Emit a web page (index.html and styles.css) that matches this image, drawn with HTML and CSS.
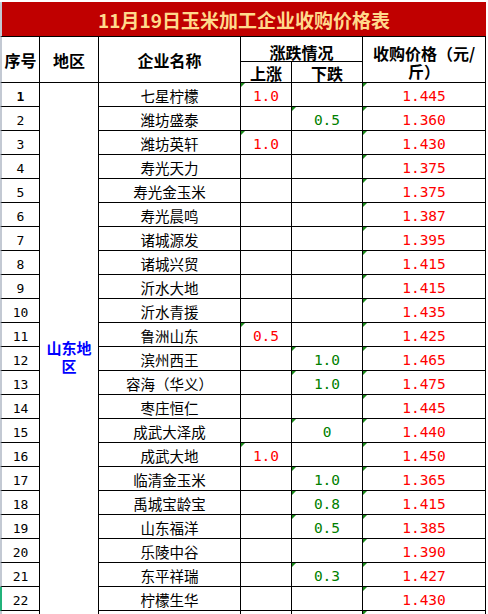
FILE: index.html
```html
<!DOCTYPE html>
<html lang="zh-CN">
<head>
<meta charset="utf-8">
<title>11月19日玉米加工企业收购价格表</title>
<link rel="stylesheet" href="styles.css">
</head>
<body>
<div class="sheet">
  <div class="grid">
    <div class="title">11月19日玉米加工企业收购价格表</div>

    <div class="c h sn-h rs2">序号</div>
    <div class="c h rs2">地区</div>
    <div class="c h rs2">企业名称</div>
    <div class="c h cs2 grp">涨跌情况</div>
    <div class="c h rs2 price-h"><span class="lines">收购价格（元/<br>斤）</span></div>
    <div class="c h sub">上涨</div>
    <div class="c h sub">下跌</div>

    <div class="c d sn bold">1</div>
    <div class="c region"><span>山东地区</span></div>
    <div class="c d name">七星柠檬</div>
    <div class="c d num up t">1.0</div>
    <div class="c d num down"></div>
    <div class="c d num val t">1.445</div>

    <div class="c d sn">2</div>
    <div class="c d name">潍坊盛泰</div>
    <div class="c d num up"></div>
    <div class="c d num down t">0.5</div>
    <div class="c d num val t">1.360</div>

    <div class="c d sn">3</div>
    <div class="c d name">潍坊英轩</div>
    <div class="c d num up t">1.0</div>
    <div class="c d num down"></div>
    <div class="c d num val t">1.430</div>

    <div class="c d sn">4</div>
    <div class="c d name">寿光天力</div>
    <div class="c d num up"></div>
    <div class="c d num down"></div>
    <div class="c d num val t">1.375</div>

    <div class="c d sn">5</div>
    <div class="c d name">寿光金玉米</div>
    <div class="c d num up"></div>
    <div class="c d num down"></div>
    <div class="c d num val t">1.375</div>

    <div class="c d sn">6</div>
    <div class="c d name">寿光晨鸣</div>
    <div class="c d num up"></div>
    <div class="c d num down"></div>
    <div class="c d num val t">1.387</div>

    <div class="c d sn">7</div>
    <div class="c d name">诸城源发</div>
    <div class="c d num up"></div>
    <div class="c d num down"></div>
    <div class="c d num val t">1.395</div>

    <div class="c d sn">8</div>
    <div class="c d name">诸城兴贸</div>
    <div class="c d num up"></div>
    <div class="c d num down"></div>
    <div class="c d num val t">1.415</div>

    <div class="c d sn">9</div>
    <div class="c d name">沂水大地</div>
    <div class="c d num up"></div>
    <div class="c d num down"></div>
    <div class="c d num val t">1.415</div>

    <div class="c d sn">10</div>
    <div class="c d name">沂水青援</div>
    <div class="c d num up"></div>
    <div class="c d num down"></div>
    <div class="c d num val t">1.435</div>

    <div class="c d sn">11</div>
    <div class="c d name">鲁洲山东</div>
    <div class="c d num up t">0.5</div>
    <div class="c d num down"></div>
    <div class="c d num val t">1.425</div>

    <div class="c d sn">12</div>
    <div class="c d name">滨州西王</div>
    <div class="c d num up"></div>
    <div class="c d num down t">1.0</div>
    <div class="c d num val t">1.465</div>

    <div class="c d sn">13</div>
    <div class="c d name">容海（华义）</div>
    <div class="c d num up"></div>
    <div class="c d num down t">1.0</div>
    <div class="c d num val t">1.475</div>

    <div class="c d sn">14</div>
    <div class="c d name">枣庄恒仁</div>
    <div class="c d num up"></div>
    <div class="c d num down"></div>
    <div class="c d num val t">1.445</div>

    <div class="c d sn">15</div>
    <div class="c d name">成武大泽成</div>
    <div class="c d num up"></div>
    <div class="c d num down t">0</div>
    <div class="c d num val t">1.440</div>

    <div class="c d sn">16</div>
    <div class="c d name">成武大地</div>
    <div class="c d num up t">1.0</div>
    <div class="c d num down"></div>
    <div class="c d num val t">1.450</div>

    <div class="c d sn">17</div>
    <div class="c d name">临清金玉米</div>
    <div class="c d num up"></div>
    <div class="c d num down t">1.0</div>
    <div class="c d num val t">1.365</div>

    <div class="c d sn">18</div>
    <div class="c d name">禹城宝龄宝</div>
    <div class="c d num up"></div>
    <div class="c d num down t">0.8</div>
    <div class="c d num val t">1.415</div>

    <div class="c d sn">19</div>
    <div class="c d name">山东福洋</div>
    <div class="c d num up"></div>
    <div class="c d num down t">0.5</div>
    <div class="c d num val t">1.385</div>

    <div class="c d sn">20</div>
    <div class="c d name">乐陵中谷</div>
    <div class="c d num up"></div>
    <div class="c d num down"></div>
    <div class="c d num val t">1.390</div>

    <div class="c d sn">21</div>
    <div class="c d name">东平祥瑞</div>
    <div class="c d num up"></div>
    <div class="c d num down t">0.3</div>
    <div class="c d num val t">1.427</div>

    <div class="c d sn sel">22</div>
    <div class="c d name">柠檬生华</div>
    <div class="c d num up"></div>
    <div class="c d num down"></div>
    <div class="c d num val t">1.430</div>

    <div class="c d sn"></div>
    <div class="c d name"></div>
    <div class="c d num up"></div>
    <div class="c d num down"></div>
    <div class="c d num val t"></div>
  </div>
</div>
</body>
</html>
```
FILE: styles.css
```css
html, body {
  margin: 0;
  padding: 0;
  background: #ffffff;
  overflow: hidden;
}

.sheet {
  padding-top: 2px;
  width: 488px;
  height: 614px;
  box-sizing: border-box;
  overflow: hidden;
}

.grid {
  display: grid;
  width: 486px;
  grid-template-columns: 40px 59px 142px 51px 71px 123px;
  grid-template-rows: 35px 25px 21px repeat(23, 24px);
  font-family: "Noto Sans CJK SC", "Noto Sans", sans-serif;
  color: #000;
}

.title {
  grid-column: 1 / -1;
  box-sizing: border-box;
  background: #c00000;
  border-left: 2px solid #c3c9d3;
  border-bottom: 1px solid #000;
  color: #ffd98c;
  font-weight: 700;
  font-size: 19px;
  line-height: 1;
  display: flex;
  align-items: center;
  justify-content: center;
  padding-top: 1px;
}

.c {
  box-sizing: border-box;
  border-right: 1px solid #000;
  border-bottom: 1px solid #000;
  display: flex;
  align-items: center;
  justify-content: center;
  text-align: center;
  position: relative;
  line-height: 1;
}

.h {
  font-weight: 700;
  font-size: 16px;
}

.rs2 {
  grid-row: span 2;
}

.cs2 {
  grid-column: span 2;
}

.grp {
  padding-top: 5px;
}

.sub {
  padding-top: 2px;
}

.price-h {
  padding-top: 4px;
}

.price-h .lines {
  display: block;
  line-height: 18px;
  text-align: center;
}

.sn-h,
.sn {
  border-left: 2px solid #c3c9d3;
}

.sn.sel {
  border-left-color: #21b27a;
}

.d {
  padding-top: 3px;
}

.sn {
  font-family: "DejaVu Sans Mono", monospace;
  font-size: 13px;
}

.sn.bold {
  font-weight: 700;
}

.name {
  font-size: 14.5px;
}

.region {
  grid-row: span 23;
  color: #0000ff;
  font-weight: 700;
  font-size: 15px;
  line-height: 18px;
  padding: 0 6px;
}

.region span {
  display: block;
  margin-top: -4px;
}

.num {
  font-family: "DejaVu Sans Mono", monospace;
  font-size: 14.5px;
}

.up,
.val {
  color: #ff0000;
}

.down {
  color: #008000;
}

.t::before {
  content: "";
  position: absolute;
  top: 0;
  left: 0;
  width: 0;
  height: 0;
  border-top: 4px solid #1a8a1a;
  border-right: 4px solid transparent;
}
```
